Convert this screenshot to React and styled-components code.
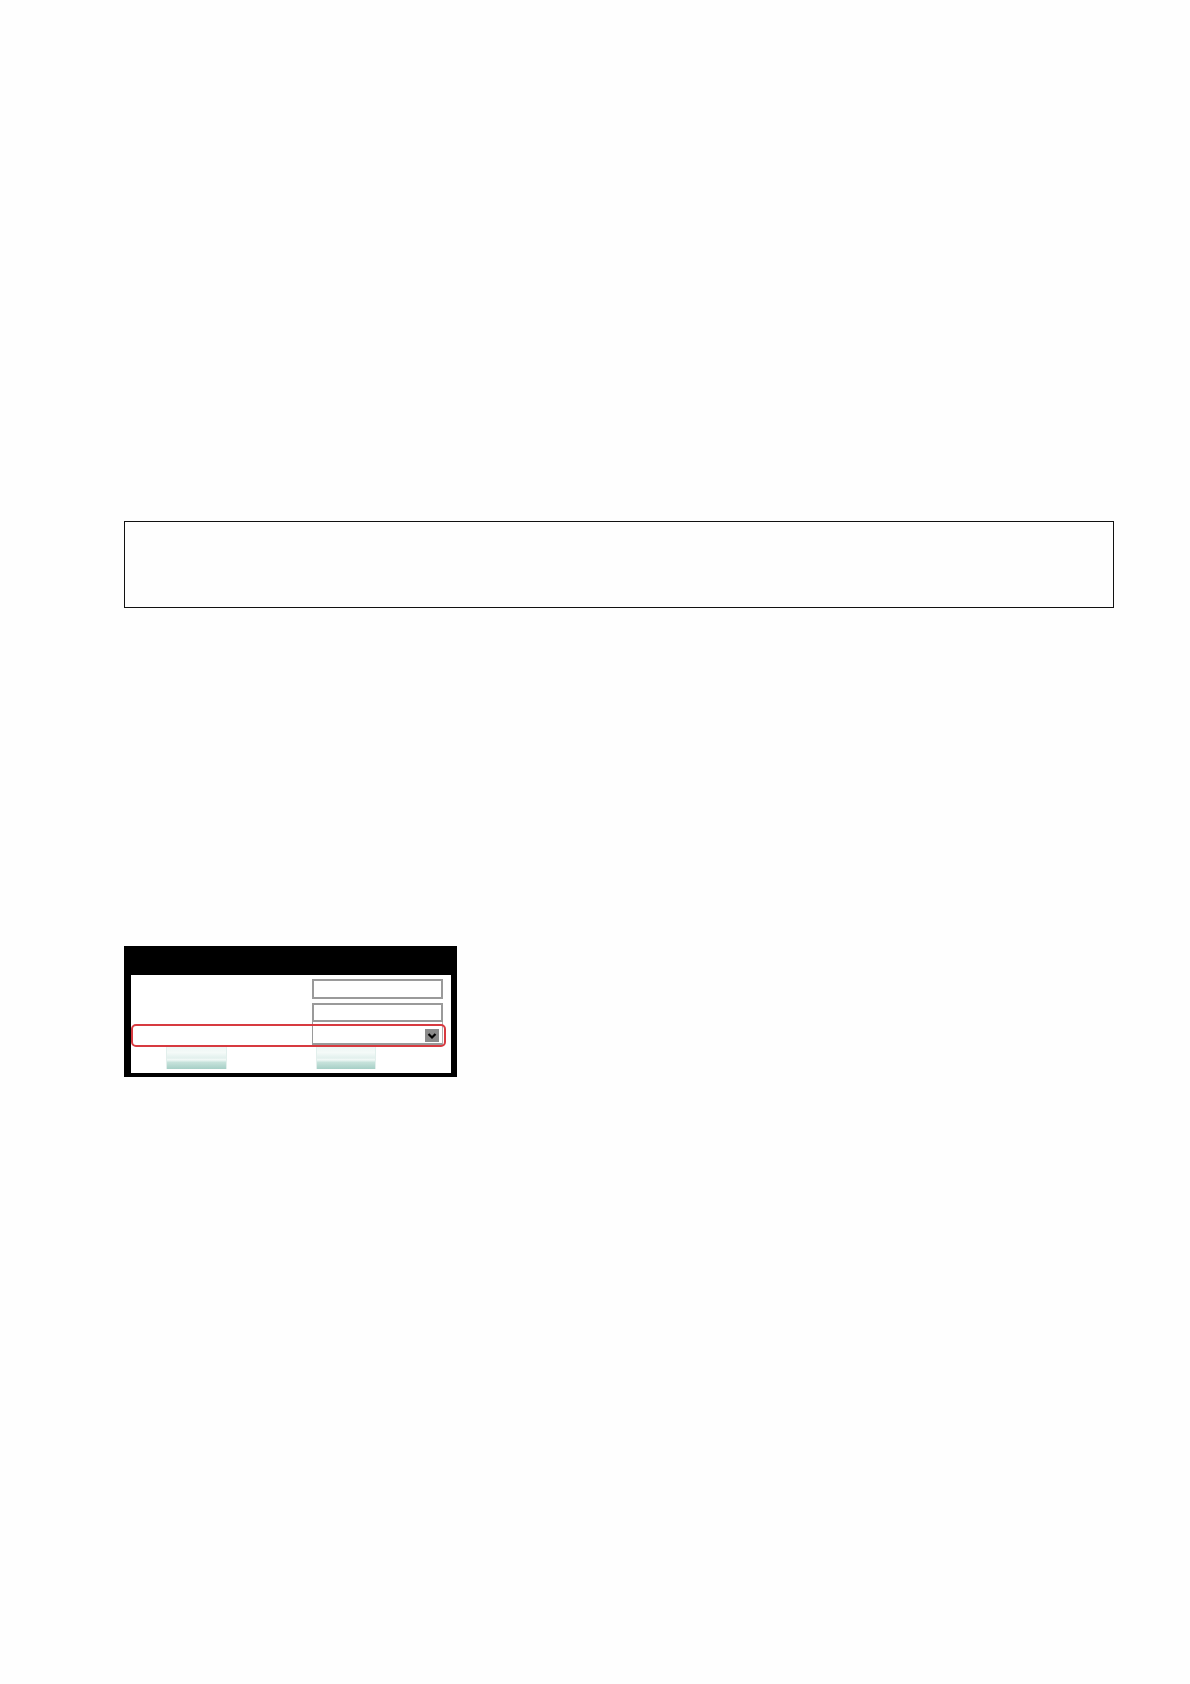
import styled, { createGlobalStyle } from 'styled-components';

const GlobalStyle = createGlobalStyle`
  html, body {
    margin: 0;
    padding: 0;
    background: #fefefe;
    font-family: "Liberation Sans", Arial, sans-serif;
  }
`;

const Page = styled.div`
  width: 1190px;
  min-height: 1684px;
  box-sizing: border-box;
  padding: 521px 0 0 124px;
`;

const NoteBox = styled.div`
  width: 990px;
  height: 87px;
  box-sizing: border-box;
  border: 1.5px solid #111;
`;

const Dialog = styled.div`
  margin-top: 338px;
  width: 333px;
  box-sizing: border-box;
  background: #000;
  border-left: 7px solid #000;
  border-right: 6px solid #000;
  border-bottom: 4px solid #000;
`;

const TitleBar = styled.div`
  height: 29px;
`;

const Body = styled.div`
  position: relative;
  background: #fff;
  height: 98px;
  padding-top: 4px;
  box-sizing: border-box;
`;

const FormRow = styled.div`
  display: grid;
  grid-template-columns: 181px 131px;
  height: ${p => p.$h}px;
  margin-bottom: ${p => p.$gap || 0}px;
`;

const Field = styled.div`
  grid-column: 2;
  box-sizing: border-box;
  background: #fff;
  border: 2px solid #9a9a9a;
  display: flex;
  align-items: flex-end;
  justify-content: flex-end;
  padding: 0 3px 1px 0;

  ${p =>
    p.$select &&
    `
    border: 0;
    border-left: 1.5px solid #9a9a9a;
    border-right: 1.5px solid #b0b0b0;
    border-bottom: 2.5px solid #9a9a9a;
  `}
`;

const SelectArrow = styled.span`
  width: 14px;
  height: 13px;
  background: #8a8a8a;
  display: flex;
  align-items: center;
  justify-content: center;
`;

const Highlight = styled.div`
  position: absolute;
  left: 0;
  top: 49px;
  width: 315px;
  height: 23px;
  box-sizing: border-box;
  border: 2px solid #d73a40;
  border-radius: 5px;
  pointer-events: none;
`;

const ButtonRow = styled.div`
  display: flex;
  padding-left: 35px;
  gap: 89px;
  margin-top: 2px;
`;

const Button = styled.div`
  width: ${p => p.$w}px;
  height: 22px;
  box-sizing: border-box;
  border-left: 1px solid #e2efec;
  border-right: 1px solid #e2efec;
  background: linear-gradient(
    to bottom,
    #eef6f4 0%,
    #f4faf8 25%,
    #e2f0ed 50%,
    #f2f9f7 58%,
    #c6e2db 70%,
    #a6cfc6 100%
  );
`;

const Chevron = () => (
  <svg width="10" height="8" viewBox="0 0 10 8">
    <path d="M1.5 2 L5 5.5 L8.5 2" fill="none" stroke="#000" strokeWidth="2.2" />
  </svg>
);

export default function App() {
  return (
    <>
      <GlobalStyle />
      <Page>
        <NoteBox />
        <Dialog>
          <TitleBar />
          <Body>
            <FormRow $h={20} $gap={4}>
              <Field />
            </FormRow>
            <FormRow $h={19}>
              <Field />
            </FormRow>
            <FormRow $h={23}>
              <Field $select>
                <SelectArrow>
                  <Chevron />
                </SelectArrow>
              </Field>
            </FormRow>
            <ButtonRow>
              <Button $w={61} />
              <Button $w={60} />
            </ButtonRow>
            <Highlight />
          </Body>
        </Dialog>
      </Page>
    </>
  );
}
